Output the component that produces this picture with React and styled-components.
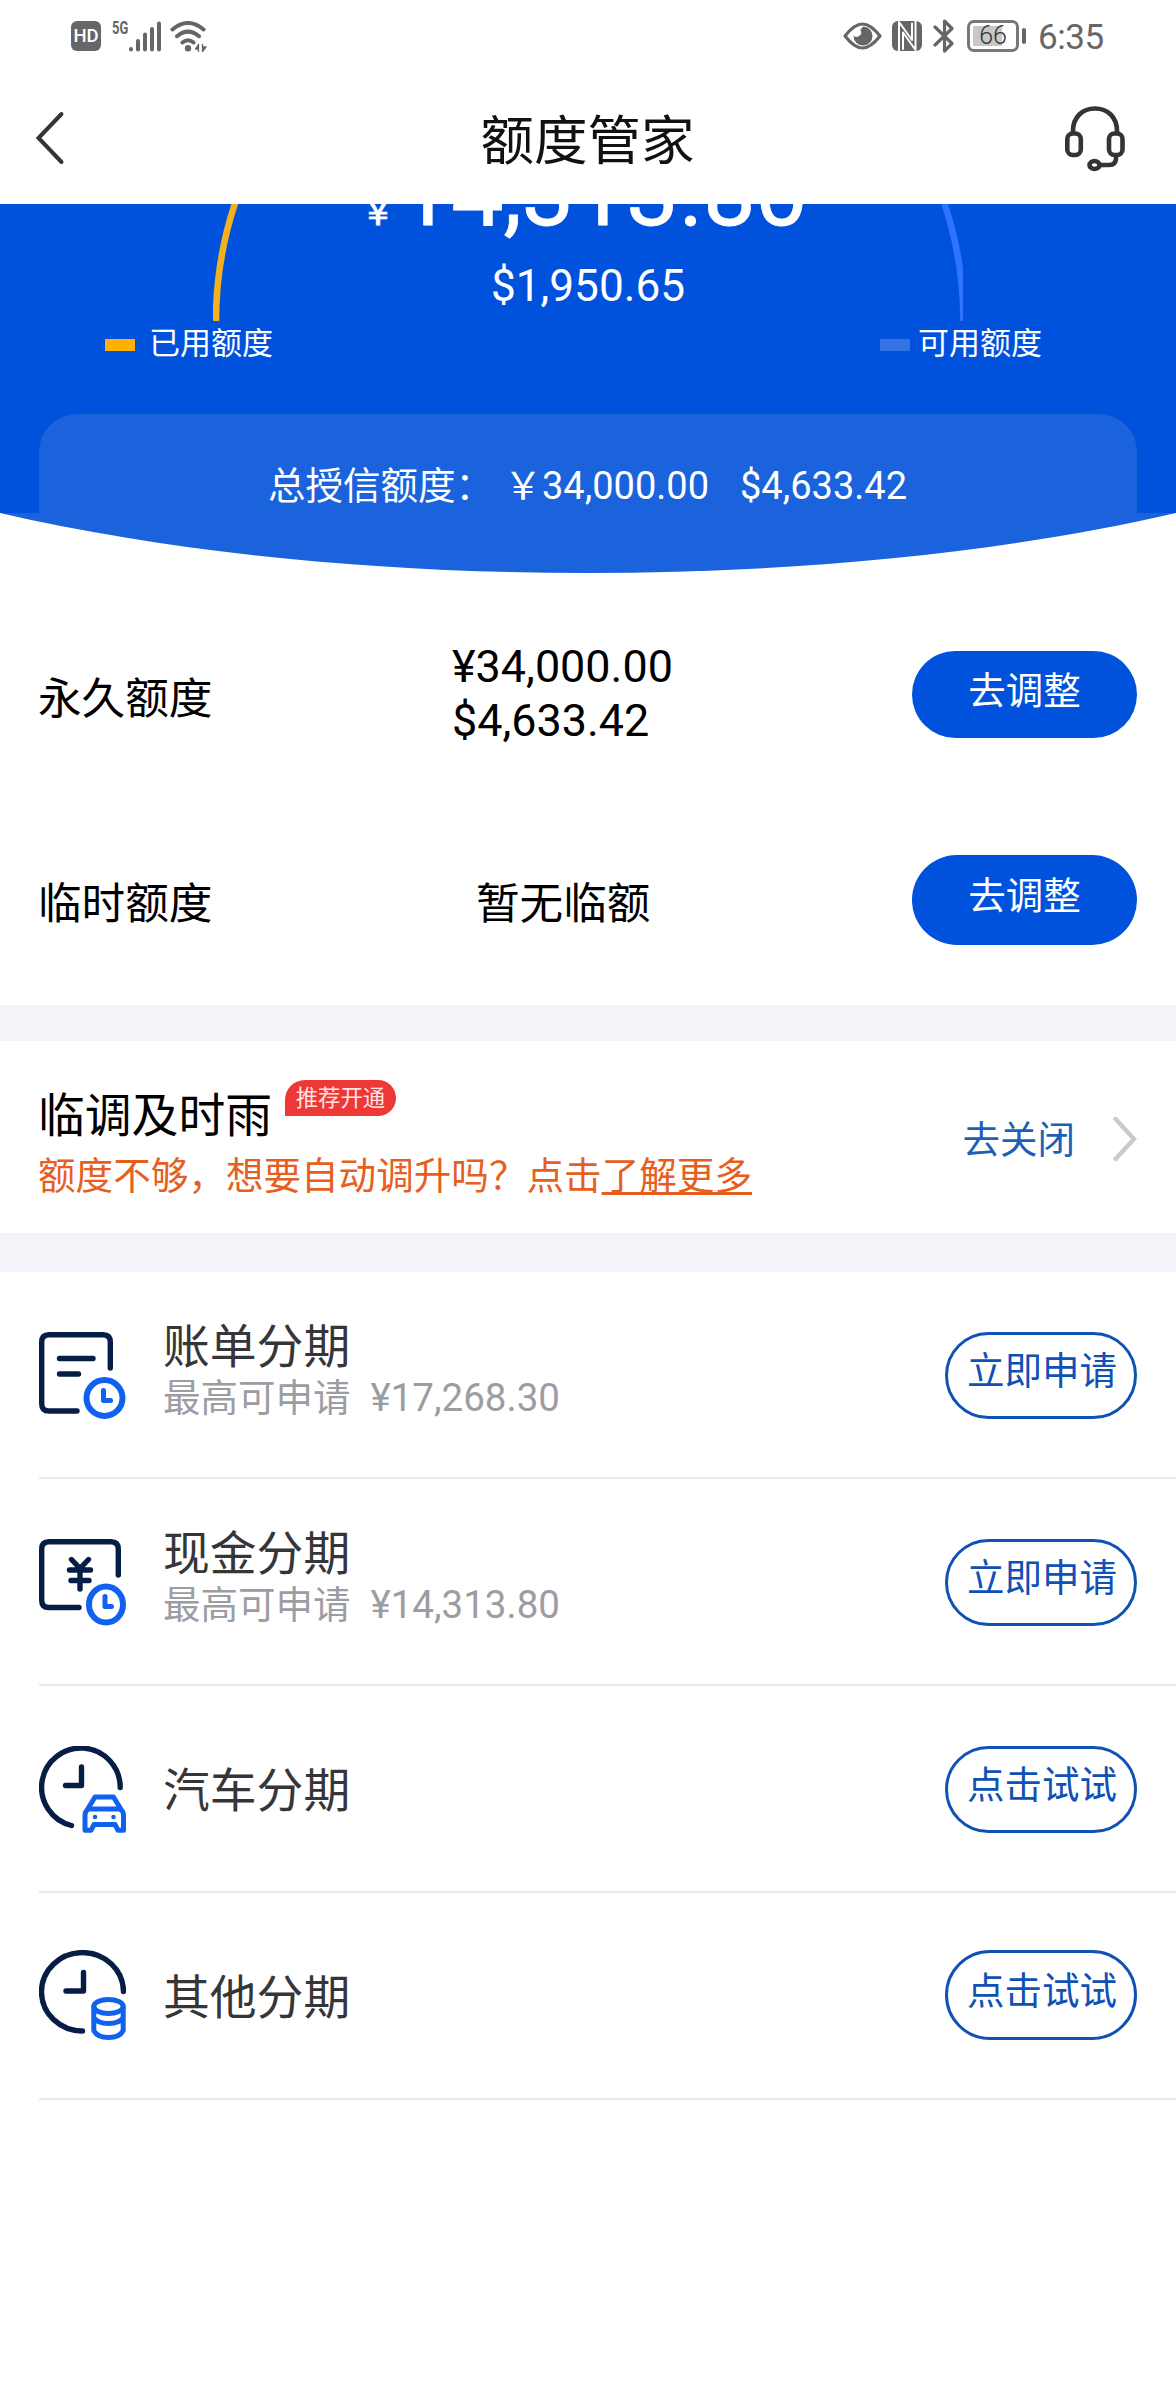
import React from 'react';
import styled, { createGlobalStyle, css } from 'styled-components';

const GlobalStyle = createGlobalStyle`
  * {
    box-sizing: border-box;
  }
  body {
    margin: 0;
    background: #fff;
    font-family: Roboto, 'Noto Sans CJK SC', sans-serif;
    color: #000;
  }
`;

const Page = styled.div`
  width: 1176px;
  height: 2400px;
  background: #fff;
  overflow: hidden;
`;

const StatusBar = styled.div`
  display: flex;
  justify-content: space-between;
  height: 72px;
  padding: 19px 72px 0 71px;
  color: #666;
`;

const StatusGroup = styled.div`
  display: flex;
  height: 34px;
  align-items: center;
`;

const StatusSvg = styled.svg`
  flex: none;
  margin-left: ${({ $gap }) => $gap || 0}px;
  fill: none;
  stroke-linecap: round;
  stroke-linejoin: round;
`;

const HdBadge = styled.span`
  width: 30px;
  height: 30px;
  border-radius: 6px;
  background: #666;
  color: #fff;
  font-size: 18.5px;
  font-weight: 500;
  line-height: 31px;
  text-align: center;
`;

const NetworkType = styled.span`
  align-self: flex-start;
  width: 17px;
  margin-left: 11px;
  font-size: 19px;
  font-weight: 700;
  line-height: 18px;
  transform: scaleX(0.68);
  transform-origin: left;
`;

const BatteryLevel = styled.span`
  display: flex;
  align-items: center;
  justify-content: center;
  width: 52px;
  height: 32px;
  margin-left: 12px;
  border: 3px solid #777;
  border-radius: 7px;
  background: linear-gradient(#c8c8c8, #c8c8c8) 3px 3px / 29px 20px no-repeat;
  color: #333;
  font-size: 25px;
  font-weight: 300;
  line-height: 26px;
`;

const BatteryTip = styled.span`
  width: 4px;
  height: 16px;
  margin-left: 3px;
  border-radius: 2px;
  background: #666;
`;

const Clock = styled.span`
  width: 66px;
  margin: 3px 0 0 12px;
  font-size: 35px;
  line-height: 34px;
  letter-spacing: -0.4px;
  white-space: nowrap;
`;

const NavBar = styled.header`
  display: flex;
  align-items: center;
  justify-content: space-between;
  height: 132px;
  padding: 0 50px 0 35px;
`;

const NavTitle = styled.h1`
  margin: 8px 0 0 46px;
  color: #111;
  font-size: 53.5px;
  font-weight: 400;
  line-height: 58px;
`;

const Hero = styled.section`
  position: relative;
  height: 309px;
  background: #0052dd;
  color: #fff;
  overflow: hidden;
`;

const Gauge = styled.svg`
  position: absolute;
  top: 0;
  left: 213px;
`;

/* scrolled half way under the nav bar */
const Available = styled.div`
  display: flex;
  align-items: baseline;
  height: 84px;
  margin-top: -52px;
  padding-left: 360px;
  font-size: 93px;
  line-height: 84px;
  -webkit-text-stroke: 0.8px #fff;
`;

const AvailableSign = styled.span`
  width: 39px;
  font-size: 36px;
`;

const AvailableUsd = styled.div`
  margin-top: 22px;
  font-size: 44.2px;
  line-height: 56px;
  text-align: center;
`;

const Legend = styled.div`
  display: flex;
  justify-content: space-between;
  margin-top: 7px;
  padding: 0 134px 0 105px;
`;

const LegendItem = styled.div`
  display: flex;
  align-items: center;
  gap: ${({ $gap }) => $gap}px;
  font-size: 31px;
  line-height: 46px;
  &::before {
    content: '';
    width: 30px;
    height: 12px;
    margin-top: 2px;
    background: ${({ $color }) => $color};
  }
`;

const Total = styled.div`
  display: flex;
  height: 99px;
  margin: 47px 39px 0;
  padding-left: 229px;
  border-radius: 38px 38px 0 0;
  background: #1b63dd;
  font-size: 38px;
  line-height: 145px;
  white-space: pre;
`;

const TotalLabel = styled.span`
  width: 236px;
  font-size: 37.5px;
`;

const TotalUsd = styled.span`
  margin-left: 31px;
`;

const HeroCurve = styled.svg`
  display: block;
`;

const Limits = styled.section`
  height: 432px;
  padding: 18px 39px 0 38px;
`;

const LimitRow = styled.div`
  display: flex;
  align-items: center;
  height: ${({ $height }) => $height}px;
  font-size: 43.6px;
`;

const LimitLabel = styled.div`
  width: ${({ $wide }) => ($wide ? 438 : 414)}px;
`;

const LimitValue = styled.div`
  flex: 1;
  ${({ $amount }) =>
    $amount &&
    css`
      padding-bottom: 2px;
      font-size: 44.9px;
      line-height: 54px;
    `}
`;

const Button = styled.button`
  width: 225px;
  height: ${({ $tall }) => ($tall ? 90 : 87)}px;
  padding: 0 0 8px;
  border: 0;
  border-radius: 45px;
  background: #0052dd;
  color: #fff;
  font: inherit;
  font-size: 37.5px;
  line-height: 56px;
  ${({ $outline }) =>
    $outline &&
    css`
      width: 192px;
      padding: 0 0 9px 2px;
      border: 3px solid #0f51b4;
      background: #fff;
      color: #0f51b4;
    `}
`;

const Band = styled.div`
  height: ${({ $height }) => $height}px;
  background: #f3f4f9;
`;

const Promo = styled.section`
  display: flex;
  justify-content: space-between;
  height: 192px;
  padding: 36px 39px 0 38px;
`;

const PromoTitle = styled.div`
  display: flex;
  font-size: 46.8px;
  line-height: 78px;
`;

const Badge = styled.span`
  align-self: flex-start;
  width: 111px;
  height: 36px;
  margin: 3px 0 0 13px;
  border-radius: 20px 18px 18px 0;
  background: #ee3737;
  color: #ffe3e3;
  font-size: 22.4px;
  line-height: 36px;
  text-align: center;
`;

const PromoText = styled.div`
  margin-top: -7px;
  color: #e65f20;
  font-size: 37.6px;
  line-height: 56px;
`;

const PromoLink = styled.a`
  text-decoration: underline;
  text-decoration-thickness: 3px;
  text-underline-offset: 3px;
`;

const PromoAction = styled.div`
  display: flex;
  align-items: center;
  gap: 36px;
  height: 124px;
  color: #1d5fb5;
  font-size: 37.5px;
`;

const PromoActionText = styled.span`
  padding-bottom: 6px;
`;

const PlanRow = styled.div`
  display: flex;
  align-items: flex-start;
  height: 207px;
  margin-left: 39px;
  padding: ${({ $tall }) => ($tall ? 57 : 60)}px 39px 0 0;
  border-bottom: 2px solid #e9e9e9;
`;

const PlanInfo = styled.div`
  flex: 1;
  margin: ${({ $offset }) => $offset}px 0 0 37px;
`;

const PlanName = styled.div`
  color: #363638;
  font-size: 46.8px;
  line-height: 66px;
`;

const PlanHint = styled.div`
  margin-top: -10px;
  color: #9b9da3;
  font-size: 37.5px;
  line-height: 56px;
  white-space: pre;
`;

const PlanAmount = styled.span`
  margin-left: 20px;
  font-size: 38.5px;
`;

const SignalIcon = () => (
  <StatusSvg width="32" height="31" viewBox="0 0 32 31" stroke="#666" strokeWidth="4">
    <path d="M2 28v.5M9 20v8.500M16 13.500v15M23 8v20.500M30 2.500v26" />
  </StatusSvg>
);

const WifiIcon = () => (
  <StatusSvg $gap={9} width="38" height="31" viewBox="0 0 38 31" stroke="#666" strokeWidth="4">
    <path d="M2.500 8.500Q18 -4.500 33.500 8.500M7 15.200Q18 6 29 15.200M12.500 21.500Q18 17 23.500 21.500" />
    <circle cx="18" cy="27.300" r="3.200" fill="#666" stroke="none" />
    <path d="M28.500 23.500v7M28.500 23.500l-3 4.500h3M32.500 23.500v7M32.500 30.500l3.500-4.500h-3.500" fill="#666" strokeWidth="1.300" />
  </StatusSvg>
);

const EyeIcon = () => (
  <StatusSvg width="39" height="28" viewBox="0 0 39 28">
    <path d="M2 14C9 5 14 2 19.500 2S30 5 37 14C30 23 25 26 19.500 26S9 23 2 14z" stroke="#666" strokeWidth="3.200" />
    <path d="M20 4.500a9.500 9.500 0 1 1-9.500 9.500q3.500 2 6.300-.5t.5-5.500z" fill="#666" />
  </StatusSvg>
);

const NfcIcon = () => (
  <StatusSvg $gap={10} width="30" height="30" viewBox="0 0 30 30">
    <rect width="30" height="30" rx="6" fill="#666" />
    <path d="M7 29.500V1L20 19V2.500M23.500 0v29L11 11.500V28" stroke="#fff" strokeWidth="2" />
  </StatusSvg>
);

const BluetoothIcon = () => (
  <StatusSvg $gap={11} width="22" height="34" viewBox="0 0 22 34">
    <path d="M2 8l17 16.500-7.500 7.500V2l7.500 7.500L2 26" stroke="#666" strokeWidth="3.200" />
  </StatusSvg>
);

const BackIcon = () => (
  <svg width="30" height="54" viewBox="0 0 30 54">
    <path d="M26.500 3L3.500 27l23 24" fill="none" stroke="#333438" strokeWidth="4" strokeLinecap="round" />
  </svg>
);

const HeadsetIcon = () => (
  <svg width="62" height="67" viewBox="0 0 62 67" fill="none" stroke="#333438" strokeWidth="4.600">
    <path d="M9 28v-2C9 12 18.500 3.500 31 3.500S53 12 53 26v2" />
    <rect x="3.300" y="28.500" width="13.500" height="21.500" rx="5.500" />
    <rect x="45" y="28.500" width="13.500" height="21.500" rx="5.500" />
    <path d="M52 51v2q0 7-7 7h-9" />
    <ellipse cx="30.500" cy="60" rx="5" ry="4" />
  </svg>
);

const ChevronIcon = () => (
  <svg width="26" height="46" viewBox="0 0 26 46">
    <path d="M4.500 3L23 23 4.500 43" fill="none" stroke="#c9cace" strokeWidth="4.400" strokeLinecap="round" />
  </svg>
);

const PlanSvg = styled.svg`
  flex: none;
  fill: none;
  stroke: #061d45;
  stroke-width: 5.4;
  stroke-linecap: round;
  stroke-linejoin: round;
  .accent {
    stroke: #1062ee;
    stroke-width: 6;
  }
  .thin {
    stroke-width: 5;
  }
`;

const BillIcon = () => (
  <PlanSvg width="87" height="87" viewBox="0 0 87 87">
    <path d="M38 79H10q-7.300 0-7.300-7.300V10q0-7.300 7.300-7.300h54q7.300 0 7.300 7.300v26M20.500 26.500h33.500M20.500 42h19" />
    <circle className="accent" cx="65.500" cy="66" r="18" />
    <path className="accent thin" d="M64.500 58.500v10h7" />
  </PlanSvg>
);

const CashIcon = () => (
  <PlanSvg width="87" height="87" viewBox="0 0 87 87">
    <path d="M40 68.500H10q-7.300 0-7.300-7.300V10q0-7.300 7.300-7.300h62q7.300 0 7.300 7.300v26" />
    <path d="M32.500 20.500l8.500 9 8.500-9M30.500 31h21M32 41.500h18M41 30v20" />
    <ellipse className="accent" cx="67" cy="65.500" rx="17" ry="18" />
    <path className="accent thin" d="M66 57.500v10h6.500" />
  </PlanSvg>
);

const CarIcon = () => (
  <PlanSvg width="87" height="87" viewBox="0 0 87 87">
    <path d="M32.500 79.500A39.300 39.300 0 1 1 81.200 41.500M42.500 21v18.500H26.500" />
    <path className="accent thin" d="M49 62.500L56 51h18.500l7 11.500" />
    <path className="accent thin" d="M50 63h30.500q4 1.500 4 6v15.300h-5.500l-3-5.800H55l-3 5.800h-6V69q0-4.500 4-6z" />
    <circle cx="56" cy="71" r="2.300" fill="#1062ee" stroke="none" />
    <circle cx="74.500" cy="71" r="2.300" fill="#1062ee" stroke="none" />
  </PlanSvg>
);

const CoinsIcon = () => (
  <PlanSvg width="87" height="90" viewBox="0 0 87 90">
    <path d="M43.500 81A41 39.200 0 1 1 84.500 41.500M44.500 22.500V41H27" />
    <ellipse className="accent thin" cx="69.500" cy="56.500" rx="14.700" ry="7" />
    <path
      className="accent thin"
      d="M54.800 57v23.500q3.500 7 14.700 7t14.700-7V57M54.800 67.500q3.500 6 14.700 6t14.700-6M54.800 78"
    />
  </PlanSvg>
);

const plans = [
  { name: '账单分期', amount: '¥17,268.30', action: '立即申请', Icon: BillIcon, offset: -18 },
  { name: '现金分期', amount: '¥14,313.80', action: '立即申请', Icon: CashIcon, offset: -18 },
  { name: '汽车分期', action: '点击试试', Icon: CarIcon, offset: 12 },
  { name: '其他分期', action: '点击试试', Icon: CoinsIcon, offset: 15, tall: true }
];

const App = () => (
  <Page>
    <GlobalStyle />
    <StatusBar>
      <StatusGroup>
        <HdBadge>HD</HdBadge>
        <NetworkType>5G</NetworkType>
        <SignalIcon />
        <WifiIcon />
      </StatusGroup>
      <StatusGroup>
        <EyeIcon />
        <NfcIcon />
        <BluetoothIcon />
        <BatteryLevel>66</BatteryLevel>
        <BatteryTip />
        <Clock>6:35</Clock>
      </StatusGroup>
    </StatusBar>

    <NavBar>
      <BackIcon />
      <NavTitle>额度管家</NavTitle>
      <HeadsetIcon />
    </NavBar>

    <Hero>
      <Gauge width="750" height="117" viewBox="213 204 750 117" fill="none" strokeWidth="6.500">
        <path d="M216 321A373.700 373.700 0 0 1 589.700 -52.700" stroke="#f2b11d" />
        <path d="M589.700 -52.700A373.700 373.700 0 0 1 963.400 321" stroke="#2f74ff" />
      </Gauge>
      <Available>
        <AvailableSign>￥</AvailableSign>
        14,313.80
      </Available>
      <AvailableUsd>$1,950.65</AvailableUsd>
      <Legend>
        <LegendItem $color="#ffb000" $gap={14}>已用额度</LegendItem>
        <LegendItem $color="#3373e4" $gap={8}>可用额度</LegendItem>
      </Legend>
      <Total>
        <TotalLabel>总授信额度：</TotalLabel>
        <span>￥34,000.00</span>
        <TotalUsd>$4,633.42</TotalUsd>
      </Total>
    </Hero>
    <HeroCurve width="1176" height="60" viewBox="0 0 1176 60">
      <path d="M0 0C345 80 831 80 1176 0z" fill="#1b63dd" />
    </HeroCurve>

    <Limits>
      <LimitRow $height={207}>
        <LimitLabel>永久额度</LimitLabel>
        <LimitValue $amount>
          ¥34,000.00
          <br />
          $4,633.42
        </LimitValue>
        <Button>去调整</Button>
      </LimitRow>
      <LimitRow $height={204}>
        <LimitLabel $wide>临时额度</LimitLabel>
        <LimitValue>暂无临额</LimitValue>
        <Button $tall>去调整</Button>
      </LimitRow>
    </Limits>

    <Band $height={36} />

    <Promo>
      <div>
        <PromoTitle>
          临调及时雨
          <Badge>推荐开通</Badge>
        </PromoTitle>
        <PromoText>
          额度不够，想要自动调升吗？点击<PromoLink>了解更多</PromoLink>
        </PromoText>
      </div>
      <PromoAction>
        <PromoActionText>去关闭</PromoActionText>
        <ChevronIcon />
      </PromoAction>
    </Promo>

    <Band $height={39} />

    {plans.map(({ name, amount, action, Icon, offset, tall }) => (
      <PlanRow key={name} $tall={tall}>
        <Icon />
        <PlanInfo $offset={offset}>
          <PlanName>{name}</PlanName>
          {amount && (
            <PlanHint>
              最高可申请
              <PlanAmount>{amount}</PlanAmount>
            </PlanHint>
          )}
        </PlanInfo>
        <Button $outline $tall={tall}>{action}</Button>
      </PlanRow>
    ))}
  </Page>
);

export default App;
